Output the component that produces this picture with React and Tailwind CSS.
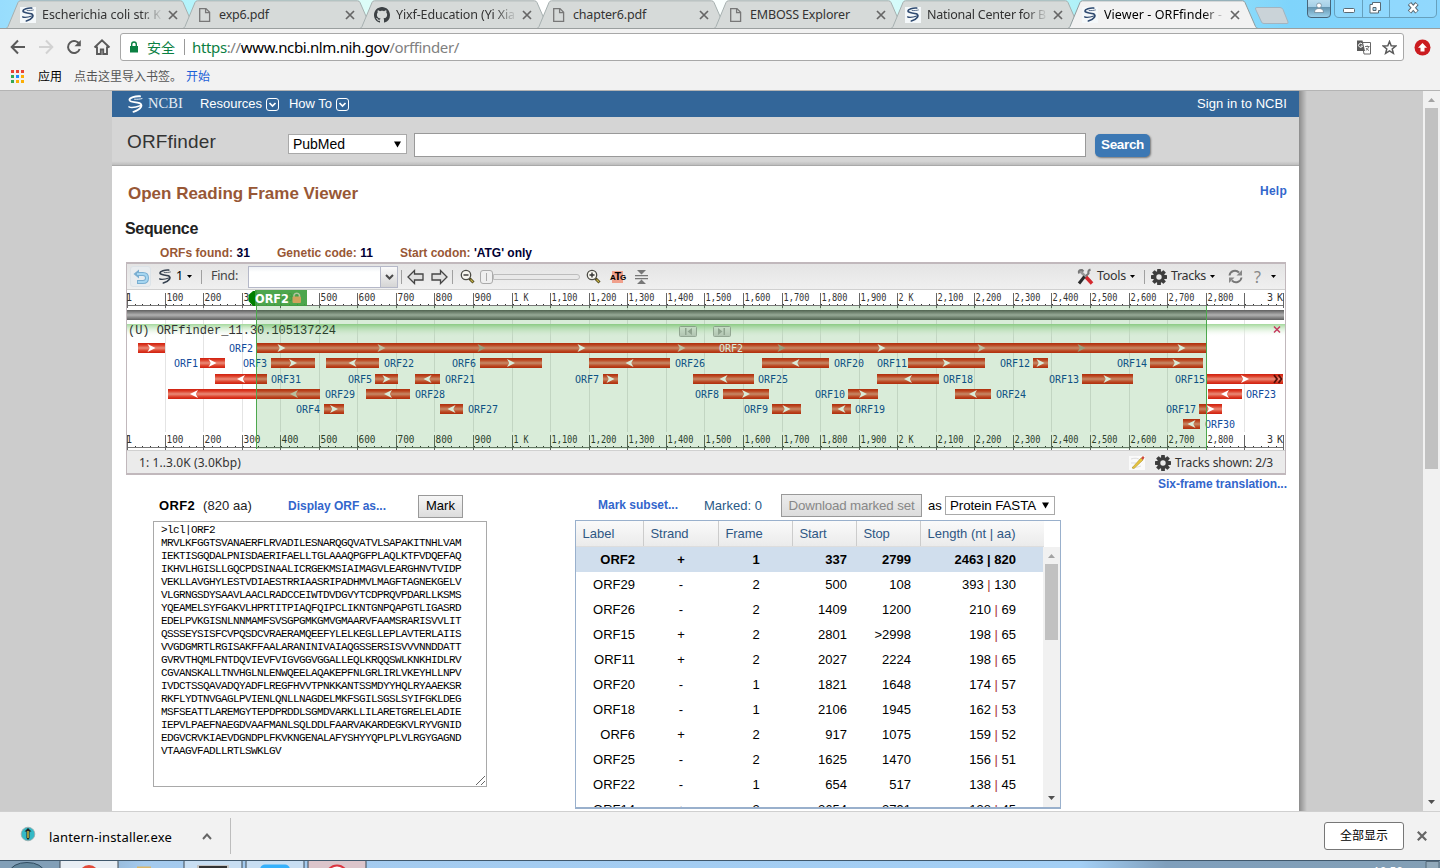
import React, { useLayoutEffect, useRef } from "react";

/* Spreads a line of text over the width that its class gives. */
function Fit({ className = "", children }) {
  const box = useRef(null);
  const run = useRef(null);
  useLayoutEffect(() => {
    const el = run.current;
    el.style.letterSpacing = "0px";
    const want = box.current.getBoundingClientRect().width;
    const have = el.getBoundingClientRect().width;
    el.style.letterSpacing = (want - have) / el.textContent.length + "px";
  }, []);
  return (
    <span ref={box} className={"inline-block shrink-0 whitespace-pre " + className}>
      <span ref={run}>{children}</span>
    </span>
  );
}

function Helix({ className, color = "#fff" }) {
  return (
    <svg viewBox="0 0 16 18" className={className} fill="none" stroke={color} strokeLinecap="round">
      <path d="M12.500 1.300C8 .8 1.800 2.800 2 5 2.300 7.600 8 6.600 12 8.200 16 10 13.500 14.500 6 16.800" strokeWidth="1.900" />
      <path d="M1.500 11.800C4 13.200 9 12 13.500 10.500" strokeWidth="1.500" />
      <path d="M7 4.200C10 4.400 12.500 4.200 14.500 3.600" strokeWidth=".9" />
    </svg>
  );
}

function Favicon({ kind }) {
  if (kind === "pdf")
    return (
      <svg viewBox="0 0 16 16" className="size-4" fill="none" stroke="#777" strokeWidth="1.300">
        <path d="M2.700 1.600h6.300l3.600 3.600v9.200H2.700zM8.600 1.600v4h4" />
      </svg>
    );
  if (kind === "github")
    return (
      <svg viewBox="0 0 16 16" className="size-4" fill="#3c4144">
        <path d="M8 0C3.580 0 0 3.580 0 8c0 3.540 2.290 6.530 5.470 7.590.4.070.55-.17.55-.38 0-.19-.01-.82-.01-1.490-2.010.37-2.530-.49-2.690-.94-.09-.23-.48-.94-.82-1.130-.28-.15-.68-.52-.01-.53.63-.01 1.080.58 1.230.82.72 1.210 1.870.87 2.330.66.070-.52.280-.87.510-1.070-1.780-.2-3.640-.89-3.640-3.950 0-.87.310-1.590.820-2.150-.08-.2-.36-1.020.080-2.120 0 0 .67-.21 2.200.820.640-.18 1.320-.27 2-.27s1.360.09 2 .27c1.530-1.040 2.200-.82 2.200-.82.440 1.100.160 1.920.080 2.120.510.560.820 1.270.820 2.150 0 3.070-1.870 3.750-3.650 3.950.290.250.540.730.540 1.480 0 1.070-.01 1.930-.01 2.200 0 .210.150.460.550.380A8.013 8.013 0 0016 8c0-4.420-3.580-8-8-8z" />
      </svg>
    );
  return (
    <span className="flex size-4 items-center justify-center bg-[#f4f8fa]">
      <Helix className="h-[15px] w-[14px]" color="#2f4a70" />
    </span>
  );
}

const TABS = [
  ["ncbi", "Escherichia coli str. K", "w-[119px]", true],
  ["pdf", "exp6.pdf", "w-[50px]", false],
  ["github", "Yixf-Education (Yi Xia", "w-[119px]", true],
  ["pdf", "chapter6.pdf", "w-[73px]", false],
  ["pdf", "EMBOSS Explorer", "w-[100px]", false],
  ["ncbi", "National Center for B", "w-[119px]", true],
  ["ncbi", "Viewer - ORFfinder -", "w-[118px]", true],
];

function Tab({ tab, active }) {
  const [kind, title, width, fade] = tab;
  return (
    <div className="relative -mr-[13px] flex h-[29px] w-[190px] shrink-0 items-center">
      <svg className="absolute inset-0" width="190" height="29" viewBox="0 0 190 29">
        <path
          d="M0 28.500C1 28 1.500 27.500 2 26.500L12 2.500Q12.700 .8 14.500 .8H174.500Q176.300 .8 177 2.500L187.500 26.500C188 27.500 188.500 28 190 28.500"
          fill={active ? "#f2f2f2" : "#d6dad9"}
          stroke={active ? "#8f9c9e" : "#a6b0b0"}
        />
        {active && <path d="M1 28.500H189" stroke="#f2f2f2" />}
      </svg>
      <span className="relative ml-[14px] flex"><Favicon kind={kind} /></span>
      <span
        className={
          "relative ml-[6px] flex w-[121px] overflow-hidden text-[12.5px] leading-[18px] " +
          (active ? "text-black " : "text-[#333] ") +
          (fade ? "[mask-image:linear-gradient(to_right,black_82%,transparent_100%)]" : "")
        }
      >
        <Fit className={width}>{title}</Fit>
      </span>
      <svg className="relative ml-[5px]" width="10" height="10" viewBox="0 0 10 10" stroke="#666" strokeWidth="1.700">
        <path d="M1 1l8 8M9 1l-8 8" />
      </svg>
    </div>
  );
}

function TabStrip() {
  return (
    <div className="flex h-[29px] shrink-0 items-start overflow-hidden border-b border-[#9a9f9f] bg-[linear-gradient(to_right,#98ddfd_0px,#b4f4fb_190px,#dcfdf8_365px,#ffffff_540px,#fafffe_720px,#d5fbfa_895px,#b4f4f8_1060px,#7fd4fb_1290px,#86d4fd_1440px)]">
      <div className="flex pl-[6px]">
        {TABS.map((t, i) => (
          <Tab key={t[1]} tab={t} active={i === 6} />
        ))}
      </div>
      <svg className="mt-[6px] ml-[9px] shrink-0" width="36" height="19" viewBox="0 0 36 19">
        <path d="M3 1.500H26Q28 1.500 29 3.500L34 16Q34.500 17.500 33 17.500H10Q8 17.500 7.500 16L1.500 3Q1 1.500 3 1.500z" fill="#cad3d8" stroke="#a2b4c0" />
      </svg>
      <svg className="ml-auto shrink-0" width="134" height="20" viewBox="1306 0 134 20">
        <defs>
          <linearGradient id="win" x1="0" y1="0" x2="0" y2="1">
            <stop offset="0" stopColor="#bcdff0" />
            <stop offset=".42" stopColor="#a5cfe6" />
            <stop offset=".45" stopColor="#6495b0" />
            <stop offset="1" stopColor="#9ed4ee" />
          </linearGradient>
        </defs>
        <path d="M1307.500-1V14Q1307.500 17.500 1311 17.500H1327Q1330.500 17.500 1330.500 14V-1" fill="url(#win)" stroke="#47657a" />
        <circle cx="1319" cy="5.500" r="2.400" fill="#fff" stroke="#66808f" strokeWidth=".7" />
        <path d="M1314.500 12.500q0-4 4.500-4t4.500 4z" fill="#fff" stroke="#66808f" strokeWidth=".7" />
        <path d="M1334.500-1V13Q1334.500 17.500 1339 17.500H1432Q1436.500 17.500 1436.500 13V-1M1362.500 0V17M1389.500 0V17" fill="#9bdbfd" fillOpacity=".5" stroke="#66a0bd" />
        <rect x="1343.500" y="8.500" width="11" height="4" rx="1" fill="#fff" stroke="#596872" />
        <path d="M1372.500 2.500h8v8h-2v2.500h-8.500v-8.500h2.500z" fill="#fff" stroke="#596872" />
        <path d="M1373 7.500h3v3h-3z" fill="#a6dcf6" stroke="#596872" />
        <path d="M1409.500 3.500l7.500 8.500M1417 3.500l-7.500 8.500" stroke="#596872" strokeWidth="4.500" />
        <path d="M1409.900 4l6.700 7.600M1416.600 4l-6.700 7.600" stroke="#fff" strokeWidth="2.500" />
      </svg>
    </div>
  );
}

function AddressBar() {
  return (
    <div className="flex h-[36px] shrink-0 items-center bg-[#f2f2f2]">
      <svg className="ml-[10px] shrink-0" width="102" height="20" viewBox="10 37 102 20" fill="none" stroke="#5a5a5a" strokeWidth="2">
        <path d="M25 47H12M18 40.500L11.700 47l6.300 6.500" />
        <path d="M39 47h13M46 40.500L52.300 47 46 53.500" stroke="#d2d2d2" />
        <path d="M79.500 44.500A6 6 0 1 0 79.700 49" />
        <path d="M80.800 40v6.300h-6.300z" fill="#5a5a5a" stroke="none" />
        <path d="M94.500 47.500L102 40.300l7.500 7.200M97 46.500V54h3.800v-4.500h2.400V54H107V46.500" strokeWidth="1.900" />
      </svg>
      <div className="ml-[8px] flex h-[28px] w-[1284px] items-center rounded-[3px] border border-[#a8a8a8] bg-white">
        <svg className="ml-[8px] shrink-0" width="10" height="12" viewBox="0 0 10 12">
          <path d="M1 5h8v6.500H1z" fill="#0b8043" />
          <path d="M2.700 5.500V3.300a2.300 2.300 0 0 1 4.600 0v2.200" fill="none" stroke="#0b8043" strokeWidth="1.400" />
        </svg>
        <Fit className="ml-[8px] w-[28px] text-[14px] text-[#0b8043]">安全</Fit>
        <span className="ml-[9px] h-[16px] w-px bg-[#999]" />
        <Fit className="ml-[7px] w-[267px] text-[15px] leading-[20px] text-[#808080]">
          <span className="text-[#0b8043]">https</span>://<span className="text-black">www.ncbi.nlm.nih.gov</span>/orffinder/
        </Fit>
        <svg className="ml-auto shrink-0" width="16" height="15" viewBox="0 0 16 15">
          <path d="M6 2.500h8.500V14H8z" fill="#fff" stroke="#666" />
          <path d="M1 .5h5.500L9 11H1z" fill="#5a5a5a" />
          <path d="M6.300 4.200A2 2 0 1 0 6.500 6H4.800" fill="none" stroke="#fff" strokeWidth="1" />
          <path d="M9 6.500h4.500M11.200 5.500v1M12.800 6.500q-.6 2.500-3 4M10 8q1 1.700 3 2.500" fill="none" stroke="#666" strokeWidth=".9" />
        </svg>
        <svg className="mr-[6px] ml-[10px] shrink-0" width="15" height="15" viewBox="0 0 15 15">
          <path d="M7.500 1.500l1.700 4.200 4.500.3-3.500 2.900 1.200 4.400-3.900-2.400-3.900 2.400 1.200-4.400L1.300 6l4.500-.3z" fill="none" stroke="#5a5a5a" strokeWidth="1.500" />
        </svg>
      </div>
      <svg className="ml-[10px] shrink-0" width="17" height="17" viewBox="0 0 17 17">
        <circle cx="8.500" cy="8.500" r="8" fill="#cb1c20" />
        <path d="M8.500 4L13 8.700h-2.500V12.500h-4V8.700H4z" fill="#fff" />
      </svg>
    </div>
  );
}

const DOTS = ["bg-[#ea4335]", "bg-[#ea4335]", "bg-[#ea4335]", "bg-[#34a853]", "bg-[#1a8cff]", "bg-[#fbae05]", "bg-[#34a853]", "bg-[#fbae05]", "bg-[#fbae05]"];

function Bookmarks() {
  return (
    <div className="flex h-[26px] shrink-0 items-center border-b border-[#b4b4b4] bg-[#f2f2f2] pb-[3px] text-[12px]">
      <div className="ml-[11px] grid grid-cols-3 gap-[2px]">
        {DOTS.map((c, i) => (
          <span key={i} className={"size-[3px] " + c} />
        ))}
      </div>
      <Fit className="ml-[14px] w-[24px] pt-px text-black">应用</Fit>
      <Fit className="ml-[12px] w-[108px] pt-px text-[#555]">点击这里导入书签。</Fit>
      <Fit className="ml-[4px] w-[24px] pt-px text-[#1a5fd8]">开始</Fit>
    </div>
  );
}

function BoxedChevron() {
  return (
    <svg className="ml-[4px]" width="13" height="13" viewBox="0 0 13 13" fill="none" stroke="#fff">
      <rect x=".5" y=".5" width="12" height="12" rx="2.500" />
      <path d="M3.500 5l3 3 3-3" strokeWidth="1.700" />
    </svg>
  );
}

function SiteHeader() {
  return (
    <>
      <div className="flex h-[26px] items-center bg-[#336699] text-[13px] text-white">
        <Helix className="ml-[15px] h-[18px] w-[17px]" />
        <Fit className="mb-px ml-[4px] w-[35px] font-['Liberation_Serif',serif] text-[14.5px] text-[#e6edf4]">NCBI</Fit>
        <Fit className="ml-[17px] w-[62px]">Resources</Fit>
        <BoxedChevron />
        <Fit className="ml-[10px] w-[43px]">How To</Fit>
        <BoxedChevron />
        <Fit className="mr-[12px] ml-auto w-[90px]">Sign in to NCBI</Fit>
      </div>
      <div className="flex h-[49px] border-b border-[#a9a9a9] bg-[linear-gradient(#d5d5d5_92%,#bdbdbd)]">
        <Fit className="mt-[11px] ml-[15px] w-[89px] text-[19px] leading-[27px] text-[#333]">ORFfinder</Fit>
        <div className="mt-[17px] ml-[72px] flex h-[20px] w-[119px] items-center border border-[#a9a9a9] bg-white text-black">
          <Fit className="ml-[4px] w-[52px] text-[14px]">PubMed</Fit>
          <svg className="mr-[5px] ml-auto" width="7" height="7" viewBox="0 0 7 7"><path d="M0 .5h7l-3.500 6z" /></svg>
        </div>
        <div className="mt-[16px] ml-[7px] h-[24px] w-[672px] border border-[#999] bg-white" />
        <div className="mt-[17px] ml-[9px] flex h-[23px] w-[55px] items-center justify-center rounded-[5px] bg-[#3c78b4] text-[13.5px] font-bold text-white shadow-[1px_1px_2px_#777]">
          <Fit className="w-[43px]">Search</Fit>
        </div>
      </div>
    </>
  );
}

/* Ruler ticks: x = 127 + bases * 0.3856 */
const px = (b) => 127 + b * 0.3856;
const HUNDREDS = Array.from({ length: 29 }, (_, i) => (i + 1) * 100);
/* 400 on the upper ruler lies under the selection's flag */
const tickLabel = (b) => (b === 1000 ? "1 K" : b === 2000 ? "2 K" : b > 1000 ? Math.floor(b / 1000) + "," + String(b % 1000).padStart(3, "0") : String(b));

/* x1, x2, lane, direction, name, x of the name */
const ORFS = [
  [138, 165, 0, 1],
  [257, 1206, 0, 0, "ORF2", 229],
  [200, 225, 1, 1, "ORF1", 174], [271, 315, 1, 1, "ORF3", 243], [326, 379, 1, -1, "ORF22", 384],
  [480, 542, 1, 1, "ORF6", 452], [589, 670, 1, -1, "ORF26", 675], [762, 829, 1, -1, "ORF20", 834],
  [908, 985, 1, 1, "ORF11", 877], [1033, 1048, 1, 1, "ORF12", 1000], [1150, 1203, 1, 1, "ORF14", 1117],
  [215, 267, 2, -1, "ORF31", 271], [375, 398, 2, 1, "ORF5", 348], [415, 440, 2, -1, "ORF21", 445],
  [603, 618, 2, 1, "ORF7", 575], [693, 754, 2, -1, "ORF25", 758], [877, 939, 2, -1, "ORF18", 943],
  [1082, 1133, 2, 1, "ORF13", 1049], [1207, 1283, 2, 1, "ORF15", 1175],
  [168, 320, 3, 0, "ORF29", 325], [366, 410, 3, -1, "ORF28", 415], [723, 769, 3, 1, "ORF8", 695],
  [848, 878, 3, 1, "ORF10", 815], [955, 991, 3, -1, "ORF24", 996], [1208, 1242, 3, -1, "ORF23", 1246],
  [324, 344, 4, 1, "ORF4", 296], [440, 463, 4, -1, "ORF27", 468], [772, 801, 4, 1, "ORF9", 744],
  [832, 851, 4, -1, "ORF19", 855], [1199, 1222, 4, 1, "ORF17", 1166],
  [1183, 1200, 5, -1, "ORF30", 1205],
];
const LANES = [343, 358, 374, 389, 404, 419];

function Arrow({ x, y, dir, fill = "#fff" }) {
  return <path d="M-4-4L4 0-4 4-2 .5V-.5z" transform={`translate(${x} ${y}) scale(${dir} 1)`} fill={fill} />;
}

function Ruler({ y }) {
  return (
    <g fill="#333">
      <path d={`M127 ${y + 12.5}H1284`} stroke="#777" />
      {Array.from({ length: 150 }, (_, i) => (
        <rect key={i} x={Math.round(px(i * 20))} y={y + 11} width="1" height="1" />
      ))}
      <rect x="127" y={y} width="1" height="15" fill="#666" />
      <rect x="1283" y={y} width="1" height="15" fill="#666" />
      <text x="126" y={y + 8} textLength="5">1</text>
      <text x="1267" y={y + 8} textLength="16">3 K</text>
      {HUNDREDS.map((b) => (
        <g key={b}>
          <rect x={Math.round(px(b)) - 1} y={y} width="1" height="15" fill="#666" />
          {b < 2900 && (
            <text x={Math.round(px(b)) + 0.5} y={y + 8} textLength={b % 1000 === 0 ? 15 : b > 1000 ? 26 : 17} lengthAdjust="spacingAndGlyphs">
              {tickLabel(b)}
            </text>
          )}
        </g>
      ))}
    </g>
  );
}

function Chart() {
  return (
    <svg className="block shrink-0 font-['DejaVu_Sans_Mono',monospace] text-[10px]" width="1158" height="160" viewBox="127 290 1158 160">
      <defs>
        <linearGradient id="red" x1="0" y1="0" x2="0" y2="1">
          <stop offset="0" stopColor="#cf2010" /><stop offset=".2" stopColor="#dc3a24" />
          <stop offset=".5" stopColor="#ea8b78" /><stop offset=".8" stopColor="#dc3a24" /><stop offset="1" stopColor="#cf2010" />
        </linearGradient>
        <linearGradient id="gray" x1="0" y1="0" x2="0" y2="1">
          <stop offset="0" stopColor="#5e5e5e" /><stop offset=".5" stopColor="#b0b0b0" /><stop offset="1" stopColor="#5e5e5e" />
        </linearGradient>
        <linearGradient id="green" x1="0" y1="0" x2="0" y2="1">
          <stop offset="0" stopColor="#a3d89b" /><stop offset="1" stopColor="#fff" stopOpacity="0" />
        </linearGradient>
        <linearGradient id="nav" x1="0" y1="0" x2="0" y2="1">
          <stop offset="0" stopColor="#f0f0f0" /><stop offset="1" stopColor="#c4c4c4" />
        </linearGradient>
      </defs>
      <rect x="127" y="290" width="1158" height="160" fill="#fff" />
      {HUNDREDS.map((b) => (
        <rect key={b} x={Math.round(px(b)) - 1} y="308" width="1" height="124" fill="#e4e4e4" />
      ))}
      <rect x="127" y="324" width="1158" height="13" fill="url(#green)" />
      <rect x="127" y="310" width="1157" height="10" fill="url(#gray)" />
      <Ruler y={293} />
      <Ruler y={435} />
      <text x="128" y="334" textLength="208" fill="#333" className="font-['Liberation_Mono',monospace] text-[12px]">(U) ORFfinder_11.30.105137224</text>
      {[679, 713].map((x) => (
        <g key={x} opacity=".8">
          <rect x={x + 0.5} y="326.500" width="17" height="10" rx="1" fill="url(#nav)" stroke="#9b9b9b" />
          <path d={x === 679 ? "M685 328v7h1.500v-7zM692 328v7l-4.500-3.500z" : "M725 328v7h-1.500v-7zM718 328v7l4.500-3.500z"} fill="#979797" />
        </g>
      ))}
      <path d="M1274 326.500l6 6M1280 326.500l-6 6" stroke="#c43a5e" strokeWidth="1.500" />
      {ORFS.map(([x1, x2, lane, dir, name, tx]) => {
        const y = LANES[lane];
        return (
          <g key={x1}>
            <rect x={x1} y={y} width={x2 - x1} height="10" fill="url(#red)" />
            {dir !== 0 && <Arrow x={(x1 + x2) / 2} y={y + 5} dir={dir} />}
            {name && <text x={tx} y={y + 9} textLength={name.length === 4 ? 24 : 30} fill="#114a9c">{name}</text>}
          </g>
        );
      })}
      {Array.from({ length: 10 }, (_, i) => (
        <Arrow key={i} x={281.5 + i * 100} y={348} dir={1} fill={["#fff", "#e0ccc0", "#b5a595"][i % 3]} />
      ))}
      <Arrow x={194} y={394} dir={-1} />
      <Arrow x={294} y={394} dir={-1} fill="#d8cdbc" />
      <text x="719" y="352" textLength="24" fill="#fff">ORF2</text>
      <path d="M1274 375l3 4-3 4M1278.500 375l3 4-3 4" fill="none" stroke="#581008" strokeWidth="1.800" />
      <rect x="256" y="306" width="951" height="143" fill="#008000" fillOpacity=".15" />
      <path d="M256.500 306V449M1206.500 306V449" stroke="#4da84d" />
      <path d="M257 291h-4l-4.500 4v6l4.500 5h4z" fill="#008000" />
      <rect x="255" y="290" width="52" height="16" fill="#3f9f3f" fillOpacity=".93" />
      <text x="255" y="303" textLength="34" fill="#fff" className="font-['DejaVu_Sans',sans-serif] text-[12px] font-bold" lengthAdjust="spacingAndGlyphs">ORF2</text>
      <path d="M294 297v-2a3 3 0 0 1 5.500 0v2" fill="none" stroke="#b2c4a0" strokeWidth="1.500" />
      <rect x="292.500" y="296.500" width="8.500" height="6.500" rx="1" fill="#d0a25c" />
    </svg>
  );
}

function Gear() {
  return (
    <svg width="16" height="16" viewBox="-8 -8 16 16" className="shrink-0">
      <g fill="#3d3d3d">
        {[0, 45, 90, 135, 180, 225, 270, 315].map((a) => (
          <rect key={a} x="-1.900" y="-8" width="3.800" height="4" rx=".6" transform={`rotate(${a})`} />
        ))}
      </g>
      <circle r="4.300" fill="none" stroke="#3d3d3d" strokeWidth="3.200" />
    </svg>
  );
}

const Caret = ({ className }) => (
  <svg className={"shrink-0 " + className} width="5" height="3" viewBox="0 0 5 3"><path d="M0 0h5L2.500 3z" /></svg>
);
const Divider = ({ className }) => <span className={"h-[14px] w-px shrink-0 bg-[#a0a0a0] " + className} />;

function Magnifier({ sign, className }) {
  return (
    <svg className={"shrink-0 " + className} width="15" height="15" viewBox="0 0 15 15">
      <path d="M9.500 9.500l4 4" stroke="#4a431b" strokeWidth="3" />
      <path d="M10.500 10.500l2.500 2.500" stroke="#c6b348" strokeWidth="1.200" />
      <circle cx="6" cy="6" r="4.700" fill="#f7f6ef" stroke="#4b4b45" strokeWidth="1.300" />
      <path d={sign === "+" ? "M3.500 6h5M6 3.500v5" : "M3.500 6h5"} stroke="#333" strokeWidth="1.400" />
    </svg>
  );
}

function ViewerToolbar() {
  return (
    <div className="flex h-[26px] shrink-0 items-center border-b border-[#d0d0d0] bg-[linear-gradient(#e4e4e4,#f0f0f0)] font-['Noto_Sans',sans-serif] text-[12.5px] text-[#333]">
      <span className="ml-[3px] flex size-[21px] shrink-0 items-center justify-center rounded-[3px] border border-[#dce3e8] bg-[#e8ecef]">
        <svg width="16" height="16" viewBox="0 0 16 16" fill="none">
          <path d="M4 5h6q4 0 4 4t-4 4H4" stroke="#79aed1" strokeWidth="4" />
          <path d="M6 .5L.5 5 6 9.500z" fill="#79aed1" />
          <path d="M4 5h6q4 0 4 4t-4 4H5" stroke="#a5d6f1" strokeWidth="2" />
        </svg>
      </span>
      <Helix className="ml-[7px] h-[15px] w-[14px] shrink-0" color="#34404f" />
      <Fit className="ml-[4px] w-[7px] text-black">1</Fit>
      <Caret className="ml-[4px]" />
      <Divider className="ml-[9px]" />
      <Fit className="ml-[9px] w-[27px] text-[#444]">Find:</Fit>
      <div className="ml-[10px] flex h-[22px] w-[150px] shrink-0 border border-[#b5b8c8] bg-white">
        <span className="flex-1 bg-[linear-gradient(#edf1f4,#fff_5px)]" />
        <span className="flex w-[17px] items-center justify-center border-l border-[#b5b8c8] bg-[linear-gradient(#fafafa,#d5d5d5)]">
          <svg width="9" height="6" viewBox="0 0 9 6" fill="none" stroke="#4a4a4a" strokeWidth="2"><path d="M1 1l3.500 3.500L8 1" /></svg>
        </span>
      </div>
      <Divider className="ml-[3px]" />
      <svg className="ml-[5px] shrink-0" width="42" height="16" viewBox="0 0 42 16" fill="#e0e0e0" stroke="#444" strokeWidth="1.300">
        <path d="M1 8l6.500-6.500V5H16v6H7.500v3.500z" />
        <path d="M40 8l-6.500-6.500V5H25v6h8.500v3.500z" />
      </svg>
      <Divider className="ml-[3px]" />
      <Magnifier sign="-" className="ml-[7px]" />
      <div className="ml-[5px] flex shrink-0 items-center">
        <span className="flex h-[14px] w-[13px] items-center justify-center rounded-[3px] border border-[#aaa] bg-[#efefef]"><span className="h-[8px] w-px bg-[#aaa]" /></span>
        <span className="h-[6px] w-[87px] rounded-r-[3px] border border-[#bdbdbd] bg-[#e9e9e9]" />
      </div>
      <Magnifier sign="+" className="ml-[6px]" />
      <span className="relative ml-[9px] flex h-[14px] w-[15px] shrink-0 items-center justify-center">
        <span className="absolute inset-x-[2px] inset-y-[1px] bg-[#f0a08c]" />
        <Fit className="relative w-[15px] font-['Liberation_Sans',sans-serif] text-[8px] leading-[14px] font-bold text-black">A<span className="text-[11px]">T</span>G</Fit>
      </span>
      <svg className="ml-[10px] shrink-0" width="13" height="16" viewBox="0 0 13 16" fill="#777">
        <path d="M2 1h9L6.500 5.500zM0 6h13v1.200H0zM0 9h13v1.200H0zM6.500 10.500L11 15H2z" />
      </svg>
      <svg className="ml-auto shrink-0" width="17" height="17" viewBox="0 0 17 17" fill="none">
        <path d="M3 3l11 11" stroke="#999" strokeWidth="2.500" />
        <path d="M2 5.500Q1 1.500 5 2l1.500 1.500M13.500 1.500q-3 1-2 4L9 8" stroke="#777" strokeWidth="2" />
        <path d="M9 9l6 6.500" stroke="#d4292e" strokeWidth="3.500" />
        <path d="M7.500 8.500L2 15.500" stroke="#2c2c2c" strokeWidth="3" />
      </svg>
      <Fit className="ml-[3px] w-[29px]">Tools</Fit>
      <Caret className="ml-[4px]" />
      <Divider className="ml-[9px]" />
      <span className="ml-[6px] flex"><Gear /></span>
      <Fit className="ml-[4px] w-[35px]">Tracks</Fit>
      <Caret className="ml-[4px]" />
      <svg className="ml-[13px] shrink-0" width="15" height="15" viewBox="0 0 15 15" fill="none" stroke="#777" strokeWidth="1.900">
        <path d="M1.500 6.500A5.500 5.500 0 0 1 11 3.500M13.500 8.500A5.500 5.500 0 0 1 4 11.500" />
        <path d="M14 1v5.500H8.500zM1 14V8.500h5.500z" fill="#888" stroke="none" />
      </svg>
      <span className="ml-[11px] w-[9px] text-[16px] leading-[20px] text-[#888]">?</span>
      <Caret className="mr-[9px] ml-[8px]" />
    </div>
  );
}

function SequenceViewer() {
  return (
    <div className="ml-[14px] flex h-[213px] w-[1160px] flex-col border-[1px] border-t-[2px] border-b-[2px] border-[#c1b8bc] bg-white">
      <ViewerToolbar />
      <Chart />
      <div className="flex flex-1 items-center border-t border-[#d0d0d0] bg-[#ebebeb] pt-px font-['Noto_Sans',sans-serif] text-[12px] text-[#333]">
        <Fit className="ml-[12px] w-[102px]">1: 1..3.0K (3.0Kbp)</Fit>
        <svg className="ml-auto shrink-0" width="16" height="16" viewBox="0 0 16 16">
          <path d="M0 1h16v14H0z" fill="#fafafa" />
          <path d="M2 4q6-2 9 1M2 8h5M3 12q5 1 9-1" fill="none" stroke="#ddd" />
          <path d="M3 13L12 3l2 2-9 8.500z" fill="#e8c53e" stroke="#ab8f2a" strokeWidth=".6" />
          <path d="M12 3l2-2 1.500 1.500L14 5z" fill="#cd4b3a" />
        </svg>
        <span className="ml-[10px] flex"><Gear /></span>
        <Fit className="mr-[12px] ml-[4px] w-[98px]">Tracks shown: 2/3</Fit>
      </div>
    </div>
  );
}

const PROTEIN = [
  ">lcl|ORF2",
  "MRVLKFGGTSVANAERFLRVADILESNARQGQVATVLSAPAKITNHLVAM",
  "IEKTISGQDALPNISDAERIFAELLTGLAAAQPGFPLAQLKTFVDQEFAQ",
  "IKHVLHGISLLGQCPDSINAALICRGEKMSIAIMAGVLEARGHNVTVIDP",
  "VEKLLAVGHYLESTVDIAESTRRIAASRIPADHMVLMAGFTAGNEKGELV",
  "VLGRNGSDYSAAVLAACLRADCCEIWTDVDGVYTCDPRQVPDARLLKSMS",
  "YQEAMELSYFGAKVLHPRTITPIAQFQIPCLIKNTGNPQAPGTLIGASRD",
  "EDELPVKGISNLNNMAMFSVSGPGMKGMVGMAARVFAAMSRARISVVLIT",
  "QSSSEYSISFCVPQSDCVRAERAMQEEFYLELKEGLLEPLAVTERLAIIS",
  "VVGDGMRTLRGISAKFFAALARANINIVAIAQGSSERSISVVVNNDDATT",
  "GVRVTHQMLFNTDQVIEVFVIGVGGVGGALLEQLKRQQSWLKNKHIDLRV",
  "CGVANSKALLTNVHGLNLENWQEELAQAKEPFNLGRLIRLVKEYHLLNPV",
  "IVDCTSSQAVADQYADFLREGFHVVTPNKKANTSSMDYYHQLRYAAEKSR",
  "RKFLYDTNVGAGLPVIENLQNLLNAGDELMKFSGILSGSLSYIFGKLDEG",
  "MSFSEATTLAREMGYTEPDPRDDLSGMDVARKLLILARETGRELELADIE",
  "IEPVLPAEFNAEGDVAAFMANLSQLDDLFAARVAKARDEGKVLRYVGNID",
  "EDGVCRVKIAEVDGNDPLFKVKNGENALAFYSHYYQPLPLVLRGYGAGND",
  "VTAAGVFADLLRTLSWKLGV",
];

function ProteinPanel() {
  return (
    <div className="ml-[41px] w-[334px] shrink-0 text-[13px]">
      <div className="flex h-[30px] items-center">
        <Fit className="ml-[6px] w-[36px] font-bold text-black">ORF2</Fit>
        <Fit className="ml-[8px] w-[49px] text-[#222]">(820 aa)</Fit>
        <Fit className="ml-[36px] w-[98px] text-[12px] font-bold text-[#3366cc]">Display ORF as...</Fit>
        <span className="ml-[32px] flex h-[23px] w-[45px] items-center justify-center border border-[#999] bg-[linear-gradient(#f6f6f6,#dcdcdc)] text-black">
          <Fit className="w-[29px] text-[13px]">Mark</Fit>
        </span>
      </div>
      <div className="flex h-[266px] flex-col border border-[#a9a9a9] bg-white pt-[2px] pl-[7px]">
        <pre className="font-['Liberation_Mono',monospace] text-[11px] leading-[13px] tracking-[-0.601px] text-black">{PROTEIN.join("\n")}</pre>
        <svg className="mt-auto mr-[1px] mb-[1px] self-end" width="9" height="9" viewBox="0 0 9 9" stroke="#666"><path d="M0 9l9-9M5 9l4-4" /></svg>
      </div>
    </div>
  );
}

const ROWS = [
  ["ORF2", "+", "1", "337", "2799", "2463", "820"],
  ["ORF29", "-", "2", "500", "108", "393", "130"],
  ["ORF26", "-", "2", "1409", "1200", "210", "69"],
  ["ORF15", "+", "2", "2801", ">2998", "198", "65"],
  ["ORF11", "+", "2", "2027", "2224", "198", "65"],
  ["ORF20", "-", "1", "1821", "1648", "174", "57"],
  ["ORF18", "-", "1", "2106", "1945", "162", "53"],
  ["ORF6", "+", "2", "917", "1075", "159", "52"],
  ["ORF25", "-", "2", "1625", "1470", "156", "51"],
  ["ORF22", "-", "1", "654", "517", "138", "45"],
  ["ORF14", "+", "2", "2654", "2791", "138", "45"],
];
const HEADS = [
  ["Label", "w-[68px]", "w-[32px]"],
  ["Strand", "w-[75px]", "w-[38px]"],
  ["Frame", "w-[74px]", "w-[37px]"],
  ["Start", "w-[64px]", "w-[27px]"],
  ["Stop", "w-[64px]", "w-[26px]"],
  ["Length (nt | aa)", "w-[123px]", "w-[88px]"],
];

function OrfTable() {
  return (
    <div className="ml-[88px] w-[486px] shrink-0 text-[13px]">
      <div className="flex h-[29px] items-center">
        <Fit className="mb-px ml-[23px] w-[80px] text-[12px] font-bold text-[#3366cc]">Mark subset...</Fit>
        <Fit className="ml-[26px] w-[58px] text-[#2a5a86]">Marked: 0</Fit>
        <span className="ml-[19px] flex h-[23px] w-[141px] items-center justify-center border border-[#999] bg-[linear-gradient(#ececec,#dcdcdc)] text-[#888]">
          <Fit className="w-[126px] text-[13.333px]">Download marked set</Fit>
        </span>
        <Fit className="ml-[6px] w-[14px] text-black">as</Fit>
        <span className="ml-[3px] flex h-[19px] w-[110px] items-center border border-[#a9a9a9] bg-white text-black">
          <Fit className="ml-[4px] w-[86px] text-[13.333px]">Protein FASTA</Fit>
          <svg className="mr-[5px] ml-auto" width="7" height="7" viewBox="0 0 7 7"><path d="M0 .5h7l-3.500 6z" /></svg>
        </span>
      </div>
      <div className="flex h-[289px] flex-col overflow-hidden border border-b-2 border-[#99b0cc] bg-white">
        <div className="flex h-[26px] w-[468px] shrink-0 border-b border-[#ddd] bg-[linear-gradient(#fafafa,#ebebeb)] text-[#2f5784]">
          {HEADS.map(([name, width, text], i) => (
            <span key={name} className={"flex shrink-0 items-center pl-[6.500px] " + width + (i < 5 ? " border-r border-[#ccc]" : "")}>
              <Fit className={text}>{name}</Fit>
            </span>
          ))}
        </div>
        <div className="flex min-h-0 flex-1">
          <div className="flex w-[467px] flex-col overflow-hidden text-black">
            {ROWS.map((r, i) => (
              <div key={r[0]} className={"flex h-[25px] shrink-0 items-center " + (i === 0 ? "bg-[#d0deed] font-bold" : "")}>
                <span className="w-[59px] text-right">{r[0]}</span>
                <span className="ml-[26px] w-[40px] text-center">{r[1]}</span>
                <span className="ml-[35px] w-[40px] text-center">{r[2]}</span>
                <span className="w-[71px] text-right">{r[3]}</span>
                <span className="w-[64px] text-right">{r[4]}</span>
                <span className="w-[105px] text-right">
                  {r[5]} <span className={i === 0 ? "" : "text-[#a33]"}>|</span> {r[6]}
                </span>
              </div>
            ))}
          </div>
          <div className="flex flex-1 flex-col items-center bg-[#f1f1f1]">
            <svg className="mt-[7px] shrink-0" width="7" height="4" viewBox="0 0 7 4" fill="#a3a3a3"><path d="M3.500 0L7 4H0z" /></svg>
            <span className="mt-[6px] h-[76px] w-[13px] bg-[#c1c1c1]" />
            <svg className="mt-auto mb-[7px] shrink-0" width="7" height="4" viewBox="0 0 7 4" fill="#505050"><path d="M0 0h7L3.500 4z" /></svg>
          </div>
        </div>
      </div>
    </div>
  );
}

function Page() {
  return (
    <div className="flex h-[720px] shrink-0 bg-[#cccccc] font-['Liberation_Sans',sans-serif]">
      <div className="ml-[112px] h-[720px] w-[1187px] shrink-0 overflow-hidden bg-white">
        <SiteHeader />
        <div className="flex h-[53px] items-center justify-between pt-[2px] text-[#985735]">
          <Fit className="ml-[16px] w-[230px] text-[17px] font-bold">Open Reading Frame Viewer</Fit>
          <Fit className="mr-[12px] mb-[5px] w-[27px] text-[12px] font-bold text-[#3366cc]">Help</Fit>
        </div>
        <div className="flex h-[19px] items-center text-[16px] font-bold text-[#222]">
          <Fit className="ml-[13px] w-[73px]">Sequence</Fit>
        </div>
        <div className="flex h-[24px] items-center pt-[6px] text-[12px] font-bold text-[#985735]">
          <Fit className="ml-[48px] w-[90px]">ORFs found: <span className="text-[#003]">31</span></Fit>
          <Fit className="ml-[27px] w-[96px]">Genetic code: <span className="text-[#003]">11</span></Fit>
          <Fit className="ml-[27px] w-[132px]">Start codon: <span className="text-[#003]">'ATG' only</span></Fit>
        </div>
        <SequenceViewer />
        <div className="flex h-[16px] items-center justify-end pt-px pr-[12px] text-[12px] font-bold text-[#3366cc]">
          <Fit className="w-[129px]">Six-frame translation...</Fit>
        </div>
        <div className="flex">
          <ProteinPanel />
          <OrfTable />
        </div>
      </div>
      <div className="w-[8px] bg-[linear-gradient(to_right,#8c8c8c,#cccccc)]" />
      <div className="ml-auto flex w-[17px] flex-col items-center bg-[#f1f1f1]">
        <svg className="mt-[7px]" width="7" height="4" viewBox="0 0 7 4" fill="#a3a3a3"><path d="M3.500 0L7 4H0z" /></svg>
        <span className="mt-[6px] h-[361px] w-[13px] bg-[#c1c1c1]" />
        <svg className="mt-auto mb-[7px]" width="7" height="4" viewBox="0 0 7 4" fill="#505050"><path d="M0 0h7L3.500 4z" /></svg>
      </div>
    </div>
  );
}

function Downloads() {
  return (
    <div className="flex h-[49px] shrink-0 items-center border-t border-[#d0d0d0] bg-[#f2f2f2]">
      <svg className="mb-[4px] ml-[20px]" width="16" height="16" viewBox="0 0 16 16">
        <circle cx="8" cy="8" r="6.800" fill="#34b9c6" stroke="#9aa" strokeWidth=".8" />
        <path d="M8 2L4.500 5.500h2V12L8 14l1.500-2V5.500h2z" fill="#222" />
        <path d="M8 5v7" stroke="#e4d84a" strokeWidth="1.300" />
      </svg>
      <Fit className="mt-[4px] ml-[13px] w-[123px] text-[13px] text-black">lantern-installer.exe</Fit>
      <svg className="ml-[30px]" width="10" height="7" viewBox="0 0 10 7" fill="none" stroke="#666" strokeWidth="1.900"><path d="M1 6l4-4.500L9 6" /></svg>
      <span className="ml-[18px] h-[36px] w-px bg-[#bdbdbd]" />
      <span className="ml-auto flex h-[28px] w-[80px] items-center justify-center rounded-[3px] border border-[#777] bg-white text-black">
        <Fit className="w-[48px] text-[12px]">全部显示</Fit>
      </span>
      <svg className="mr-[13px] ml-[13px]" width="10" height="10" viewBox="0 0 10 10" stroke="#666" strokeWidth="2.200"><path d="M.8.8l8.400 8.400M9.200.8L.8 9.200" /></svg>
    </div>
  );
}

function Taskbar() {
  return (
    <svg className="block h-[8px] w-[1440px] shrink-0" viewBox="0 860 1440 8">
      <defs>
        <linearGradient id="bar"><stop offset="0" stopColor="#829fb7" /><stop offset=".04" stopColor="#829fb7" /><stop offset=".1" stopColor="#a4caee" /><stop offset=".75" stopColor="#a3cff5" /><stop offset=".81" stopColor="#7f9fbc" /><stop offset="1" stopColor="#839fb5" /></linearGradient>
      </defs>
      <rect y="860" width="1440" height="8" fill="url(#bar)" />
      <ellipse cx="27" cy="872" rx="17" ry="9.500" fill="#65889e" stroke="#304c60" />
      <path d="M60 869v-7.500q0-1 1-1h56q1 0 1 1V869" fill="#e8eef4" stroke="#3c4852" />
      <path d="M184 869v-7.500q0-1 1-1h56q1 0 1 1V869M246 869v-7.500q0-1 1-1h56q1 0 1 1V869" fill="#c8def2" stroke="#3c4852" />
      <path d="M308 869v-7.500q0-1 1-1h56q1 0 1 1V869" fill="#dcc5cb" stroke="#3c4852" />
      <circle cx="89" cy="875" r="10" fill="#e24a39" />
      <rect x="137" y="866.500" width="14" height="2" fill="#d9b66a" />
      <path d="M197 865h32v4h-32z" fill="#c4c4c4" /><path d="M199 866h28v3h-28z" fill="#333" />
      <path d="M260 869q1-4.500 5-4.500h20q4 0 5 4.500z" fill="#36b1fb" />
      <circle cx="337" cy="876" r="10.500" fill="#fff" stroke="#dc3540" strokeWidth="2" />
      <path d="M0 860.500H1440" stroke="#40586c" />
      <text x="1373" y="876" textLength="30" fill="#fff" className="font-['Noto_Sans',sans-serif] text-[12px]">10:50</text>
      <path d="M1426 869V861.500h13V869" fill="#91a9ba" stroke="#536879" />
    </svg>
  );
}

export default function App() {
  return (
    <div className="flex h-[868px] w-[1440px] flex-col overflow-hidden font-['Noto_Sans','Noto_Sans_CJK_SC',sans-serif]">
      <TabStrip />
      <AddressBar />
      <Bookmarks />
      <Page />
      <Downloads />
      <Taskbar />
    </div>
  );
}
